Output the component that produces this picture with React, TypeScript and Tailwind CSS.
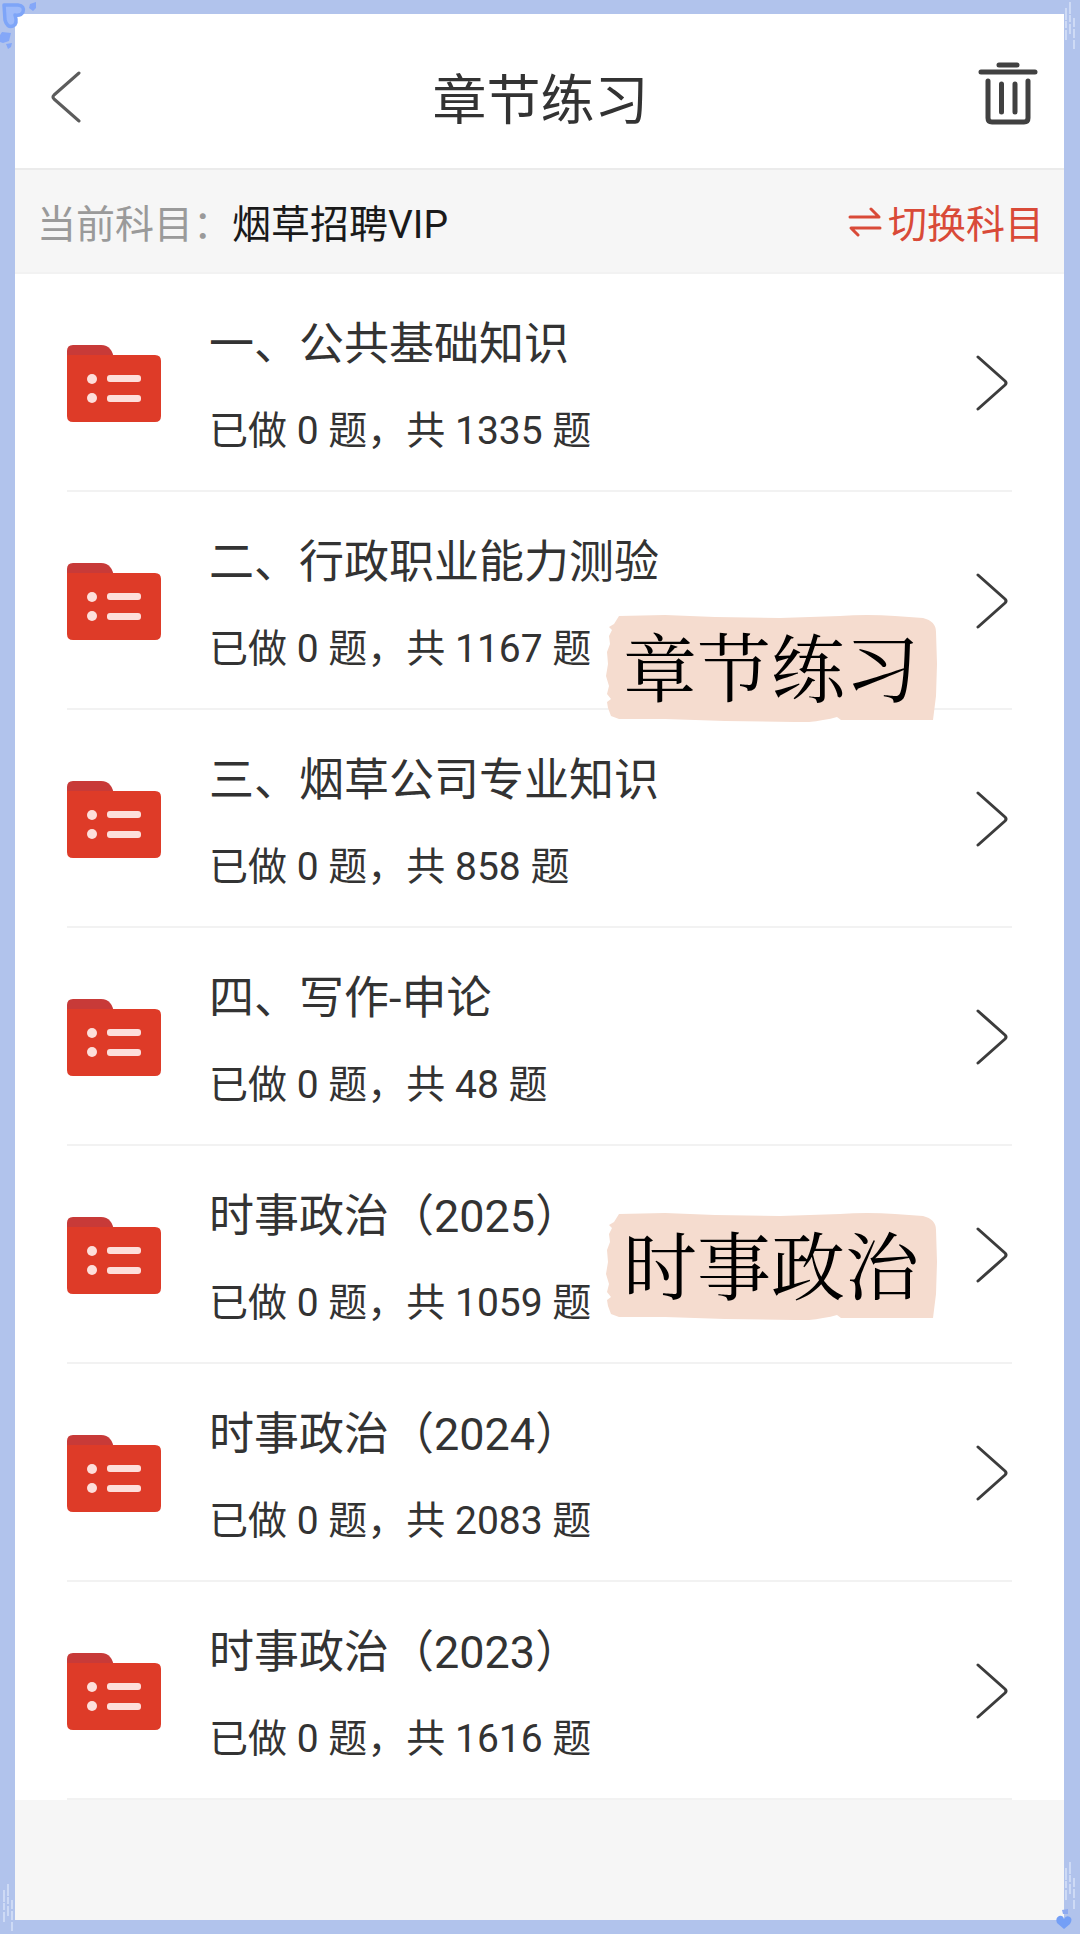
import type { ReactNode } from "react";

type Chapter = { title: string; done: number; total: number; note?: ReactNode };

const chapters: Chapter[] = [
  { title: "一、公共基础知识", done: 0, total: 1335 },
  { title: "二、行政职业能力测验", done: 0, total: 1167, note: <Note className="top-[122px]">章节练习</Note> },
  { title: "三、烟草公司专业知识", done: 0, total: 858 },
  { title: "四、写作-申论", done: 0, total: 48 },
  { title: "时事政治（2025）", done: 0, total: 1059, note: <Note className="top-[66px]">时事政治</Note> },
  { title: "时事政治（2024）", done: 0, total: 2083 },
  { title: "时事政治（2023）", done: 0, total: 1616 },
];

/* brush-stroke label lying over a row */
function Note({ children, className }: { children: ReactNode; className: string }) {
  return (
    <div className={`pointer-events-none absolute right-[75px] z-10 flex h-[108px] w-[332px] items-center justify-center pb-2 ${className}`}>
      <svg viewBox="0 0 332 108" className="absolute inset-0 h-full w-full" aria-hidden="true">
        <path
          fill="#f5dccf"
          d="M14 2 L60 1 L110 3 L175 4 L235 2 Q262 0 290 2 L318 4 Q331 7 331 18 L332 50 L331 82 L328 106 L236 106 L232 103 Q226 105 218 106 Q204 109 190 108 L120 107 L60 105 L14 105 L6 102 L3 94 L2 88 L6 85 L2 80 L4 72 L1 62 L3 50 L2 38 L5 30 L4 22 L7 16 L4 13 L9 10 Z"
        />
      </svg>
      <span className="relative font-['Noto_Serif_CJK_SC','Noto_Serif_SC','Source_Han_Serif_SC','Noto_Sans_CJK_SC',serif] text-[74px] leading-[100px] font-normal text-black">
        {children}
      </span>
    </div>
  );
}

function FolderIcon() {
  return (
    <svg viewBox="0 0 94 77" className="h-[77px] w-[94px] shrink-0" aria-hidden="true">
      <path fill="#c83a38" d="M6 0 H34 C42 0 46 6 47 14 H0 V6 Q0 0 6 0 Z" />
      <path fill="#de3b28" d="M0 10 H88 Q94 10 94 16 V71 Q94 77 88 77 H6 Q0 77 0 71 Z" />
      <g fill="#fddfdb">
        <circle cx="25" cy="34" r="5" />
        <circle cx="25" cy="53" r="5" />
        <rect x="40" y="30" width="34" height="7" rx="3" />
        <rect x="40" y="50" width="34" height="7" rx="3" />
      </g>
    </svg>
  );
}

function TrashIcon() {
  return (
    <svg viewBox="0 0 60 64" className="h-16 w-[60px]" fill="none" stroke="#414141" strokeWidth="5" strokeLinecap="round" aria-hidden="true">
      <path d="M21 3 H39 M3 10 H57" />
      <path d="M10 19 V56 Q10 60 14 60 H46 Q50 60 50 56 V19" />
      <path d="M23.500 22 V50 M37 22 V50" />
    </svg>
  );
}

function HeartCorner() {
  return (
    <svg viewBox="0 0 40 50" className="absolute top-0 left-0 h-[50px] w-10" aria-hidden="true">
      <path d="M4 5 H18 Q25 6 23 12 Q21 16 15 15 Q18 24 13 26 Q7 28 5 20 Z" fill="#9dbafa" stroke="#7ea5f8" strokeWidth="3.500" strokeLinejoin="round" />
      <path d="M30 4 L36 2 L36 8 L33 11 L29 8 Z M2 32 L11 33 L9 41 L3 43 L0 42 V35 Z M6 44 L12 43 L11 47 L8 49 Z" fill="#84a7f8" />
    </svg>
  );
}

function Sparks({ className }: { className: string }) {
  return (
    <svg viewBox="0 0 12 52" className={`absolute h-[52px] w-3 ${className}`} fill="none" stroke="#eaf1fe" aria-hidden="true">
      <path d="M2 8 V40 M6 2 V34" strokeDasharray="12 1 7 2" />
      <path d="M10 18 V50" strokeDasharray="9 2" />
    </svg>
  );
}

export default function App() {
  return (
    <div className="relative flex min-h-screen flex-col bg-[#b1c3ec] py-[14px] pr-4 pl-[15px] font-[Roboto,'Noto_Sans_CJK_SC',sans-serif] text-[#333333]">
      <HeartCorner />
      <Sparks className="top-0 right-1" />
      <Sparks className="bottom-0 left-[2px]" />
      <Sparks className="right-1 bottom-[22px]" />

      <main className="flex grow flex-col rounded-tl-md bg-[#f6f6f6]">
        <header className="flex h-[156px] items-center justify-between rounded-tl-md border-b-2 border-[#ebebeb] bg-white pt-3 pr-[26px] pl-9">
          <button type="button" aria-label="返回" className="w-[52px]">
            <svg viewBox="0 0 30 52" className="h-[52px] w-[30px]" fill="none" stroke="#5c5c5c" strokeWidth="3" strokeLinecap="round" strokeLinejoin="round" aria-hidden="true">
              <path d="M28 2 L3 24 Q1 26 3 28 L28 50" />
            </svg>
          </button>
          <h1 className="pt-[10px] text-[54px] leading-[80px]">章节练习</h1>
          <button type="button" aria-label="清空记录" className="pb-[6px]">
            <TrashIcon />
          </button>
        </header>

        <section className="flex h-[104px] items-center justify-between border-b-2 border-[#f2f2f2] pt-2 pr-5 pl-[22px] text-[39px] leading-[56px]">
          <p className="text-[#9a9a9a]">
            当前科目：<span className="text-[#1a1a1a]">烟草招聘VIP</span>
          </p>
          <button type="button" className="flex items-center gap-[6px] text-[#d94a38]">
            <svg viewBox="0 0 34 30" className="mb-[6px] h-[30px] w-[34px]" fill="none" stroke="currentColor" strokeWidth="3" strokeLinecap="round" strokeLinejoin="round" aria-hidden="true">
              <path d="M2 10 H31 L23 2 M32 21 H3 L10 28" />
            </svg>
            切换科目
          </button>
        </section>

        <ul className="bg-white px-[52px]">
          {chapters.map((c) => (
            <li key={c.title} className="relative border-b-2 border-[#f2f2f2]">
              <a href="#" className="flex h-[216px] items-center pt-[2px]">
                <FolderIcon />
                <div className="grow pt-2 pl-12">
                  <h2 className="text-[45px] leading-[60px]">{c.title}</h2>
                  <p className="mt-7 text-[39px] leading-[56px]">
                    已做 {c.done} 题，共 {c.total} 题
                  </p>
                </div>
                <svg viewBox="0 0 32 56" className="mr-1 h-14 w-8 shrink-0" fill="none" stroke="#3c3c3c" strokeWidth="3" strokeLinecap="round" strokeLinejoin="round" aria-hidden="true">
                  <path d="M2 2 L29 26 Q31 28 29 30 L2 54" />
                </svg>
              </a>
              {c.note}
            </li>
          ))}
        </ul>
      </main>

      <svg viewBox="0 0 18 22" className="absolute right-[7px] bottom-1 h-[22px] w-[18px]" aria-hidden="true">
        <path d="M7 2 L13 1 L13 6 L8 6 Z" fill="#8eaaf0" />
        <path d="M9 21 L2 15 Q0 10 4 8 Q8 7 9 11 Q11 7 15 9 Q18 11 15 16 Z" fill="#749ff6" />
      </svg>
    </div>
  );
}
